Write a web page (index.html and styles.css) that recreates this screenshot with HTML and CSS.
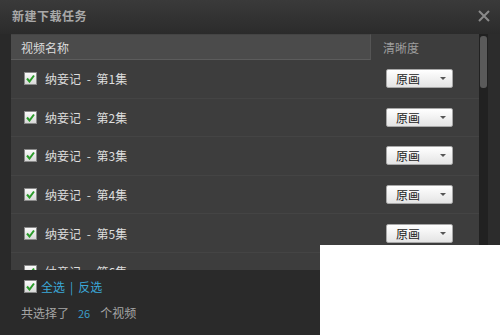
FILE: index.html
```html
<!DOCTYPE html>
<html lang="zh-CN">
<head>
<meta charset="utf-8">
<title>新建下载任务</title>
<link rel="stylesheet" href="styles.css">
</head>
<body>
<div class="window">
  <div class="titlebar">
    <span class="title">新建下载任务</span>
    <svg class="close" width="12" height="12" viewBox="0 0 12 12"><path d="M1 1 L11 11 M11 1 L1 11" stroke="#8a8a8a" stroke-width="2"/></svg>
  </div>
  <div class="main">
    <div class="list">
      <div class="header">
        <div class="hname">视频名称</div>
        <div class="hq">清晰度</div>
      </div>
      <div class="rows">
        <div class="row"><div class="name"><span class="cb"><svg width="9" height="9" viewBox="0 0 9 9"><path d="M1 4.5 L3.5 7.5 L8 1.5" stroke="#2a9a2a" stroke-width="2" fill="none"/></svg></span>纳妾记 - 第1集</div><div class="q"><div class="dd">原画<i class="arrow"></i></div></div></div>
        <div class="row"><div class="name"><span class="cb"><svg width="9" height="9" viewBox="0 0 9 9"><path d="M1 4.5 L3.5 7.5 L8 1.5" stroke="#2a9a2a" stroke-width="2" fill="none"/></svg></span>纳妾记 - 第2集</div><div class="q"><div class="dd">原画<i class="arrow"></i></div></div></div>
        <div class="row"><div class="name"><span class="cb"><svg width="9" height="9" viewBox="0 0 9 9"><path d="M1 4.5 L3.5 7.5 L8 1.5" stroke="#2a9a2a" stroke-width="2" fill="none"/></svg></span>纳妾记 - 第3集</div><div class="q"><div class="dd">原画<i class="arrow"></i></div></div></div>
        <div class="row"><div class="name"><span class="cb"><svg width="9" height="9" viewBox="0 0 9 9"><path d="M1 4.5 L3.5 7.5 L8 1.5" stroke="#2a9a2a" stroke-width="2" fill="none"/></svg></span>纳妾记 - 第4集</div><div class="q"><div class="dd">原画<i class="arrow"></i></div></div></div>
        <div class="row"><div class="name"><span class="cb"><svg width="9" height="9" viewBox="0 0 9 9"><path d="M1 4.5 L3.5 7.5 L8 1.5" stroke="#2a9a2a" stroke-width="2" fill="none"/></svg></span>纳妾记 - 第5集</div><div class="q"><div class="dd">原画<i class="arrow"></i></div></div></div>
        <div class="row"><div class="name"><span class="cb"><svg width="9" height="9" viewBox="0 0 9 9"><path d="M1 4.5 L3.5 7.5 L8 1.5" stroke="#2a9a2a" stroke-width="2" fill="none"/></svg></span>纳妾记 - 第6集</div><div class="q"><div class="dd">原画<i class="arrow"></i></div></div></div>
      </div>
    </div>
    <div class="scroll"><div class="thumb"></div></div>
    <div class="side"></div>
  </div>
  <div class="footer">
    <div class="selall"><span class="cb"><svg width="9" height="9" viewBox="0 0 9 9"><path d="M1 4.5 L3.5 7.5 L8 1.5" stroke="#2a9a2a" stroke-width="2" fill="none"/></svg></span><span class="link">全选</span><span class="sep">|</span><span class="link">反选</span></div>
    <div class="count">共选择了<span class="num">26</span>个视频</div>
  </div>
  <div class="cover"></div>
</div>
</body>
</html>
```

FILE: styles.css
```css
html, body {
  margin: 0;
  padding: 0;
}
body {
  width: 500px;
  height: 335px;
  overflow: hidden;
  background: #2a2a2a;
  font-family: "Noto Sans CJK SC", "Noto Sans", sans-serif;
  font-size: 12px;
}
.window {
  position: relative;
  width: 500px;
  height: 335px;
  display: flex;
  flex-direction: column;
  background: #292929;
}
.titlebar {
  height: 34px;
  flex: none;
  display: flex;
  align-items: center;
  justify-content: space-between;
  padding: 0 10px 0 12px;
  background: linear-gradient(#3a3a3a, #2b2b2b);
}
.title {
  font-size: 12px;
  font-weight: bold;
  color: #a9a9a9;
  letter-spacing: 0.5px;
  margin-top: -3px;
}
.close {
  margin-top: -3px;
}
.main {
  height: 236px;
  flex: none;
  display: flex;
  padding-left: 11px;
}
.list {
  width: 468px;
  background: #3d3d3d;
  overflow: hidden;
  display: flex;
  flex-direction: column;
}
.header {
  height: 26px;
  flex: none;
  display: flex;
}
.hname {
  width: 349px;
  background: #4b4b4b;
  border-top: 1px solid #444;
  border-bottom: 1px solid #5c5c5c;
  border-right: 1px solid #555;
  padding-left: 10px;
  display: flex;
  align-items: center;
  color: #dcdcdc;
}
.hq {
  padding-left: 12px;
  display: flex;
  align-items: center;
  color: #9e9e9e;
}
.rows {
  display: flex;
  flex-direction: column;
  overflow: hidden;
}
.row {
  height: 38.6px;
  flex: none;
  display: flex;
  align-items: center;
  box-sizing: border-box;
  border-bottom: 1px solid #444;
}
.name {
  width: 347px;
  padding-left: 13px;
  display: flex;
  align-items: center;
  color: #dedede;
  word-spacing: 3px;
  white-space: pre;
}
.cb {
  width: 11px;
  height: 11px;
  border: 1px solid #8a8a8a;
  background: linear-gradient(#fafafa, #d8d8d8);
  display: inline-flex;
  align-items: center;
  justify-content: center;
  margin-right: 8px;
  flex: none;
}
.q {
  padding-left: 15px;
}
.dd {
  position: relative;
  width: 56px;
  height: 17px;
  padding-left: 9px;
  border: 1px solid #a8a8a8;
  border-radius: 2px;
  background: linear-gradient(#ffffff, #e4e4e4);
  color: #222;
  line-height: 17px;
}
.arrow {
  position: absolute;
  right: 6px;
  top: 7px;
  width: 0;
  height: 0;
  border-left: 3px solid transparent;
  border-right: 3px solid transparent;
  border-top: 3px solid #555;
}
.scroll {
  width: 9px;
  background: #212121;
  padding-top: 2px;
  display: flex;
  justify-content: center;
}
.thumb {
  width: 7px;
  height: 52px;
  border-radius: 3px;
  background: #5a5a5a;
}
.side {
  width: 12px;
  background: #2c2c2c;
}
.footer {
  flex: 1;
  background: #2a2a2a;
  padding-left: 24px;
  display: flex;
  flex-direction: column;
}
.selall {
  display: flex;
  align-items: center;
  height: 30px;
  margin-top: 1px;
}
.selall .cb {
  margin-right: 4px;
}
.link {
  color: #3ba8d8;
}
.sep {
  color: #3ba8d8;
  margin: 0 5px;
}
.count {
  margin-left: -3px;
  margin-top: 3px;
  color: #a6a6a6;
}
.num {
  color: #3a9ec9;
  margin: 0 10px 0 9px;
  font-size: 11px;
}
.cover {
  position: absolute;
  left: 320px;
  top: 245px;
  width: 180px;
  height: 90px;
  background: #ffffff;
}
```
